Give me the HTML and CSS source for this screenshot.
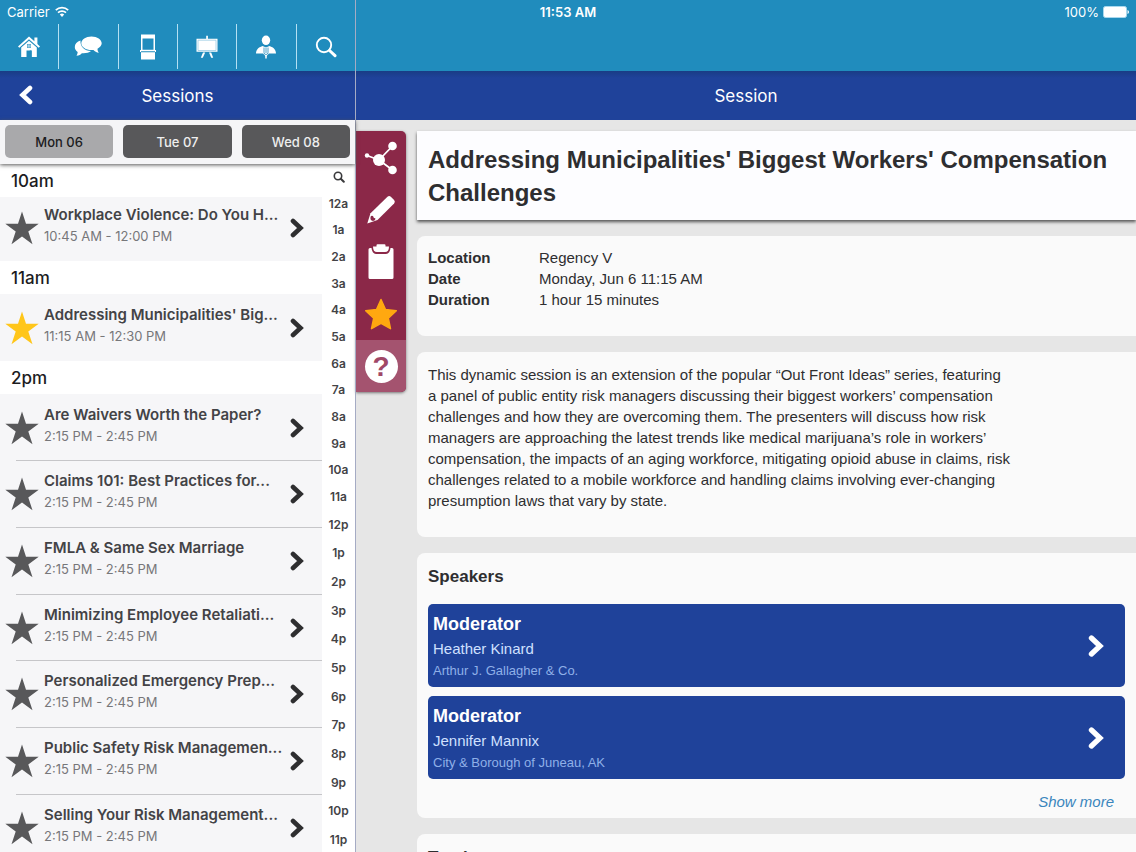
FILE: index.html
```html
<!DOCTYPE html>
<html lang="en">
<head>
<meta charset="utf-8">
<meta name="viewport" content="width=device-width, initial-scale=1">
<title>Session</title>
<link rel="stylesheet" href="styles.css">
</head>
<body>
<svg class="defs" aria-hidden="true">
  <symbol id="star" viewBox="0 0 34 34"><path d="M17 .5l4 12.300h12.700l-10.400 7.700 4.200 12.800L17 25.500 6.500 33.300l4.200-12.800L.3 12.800H13z"/></symbol>
  <symbol id="chev" viewBox="0 0 14 20"><path d="M3 3l7.500 7L3 17" fill="none" stroke="currentColor" stroke-width="4.600" stroke-linecap="round" stroke-linejoin="miter"/></symbol>
</svg>
<div class="app">
  <header class="top">
    <div class="status">
      <span class="carrier">Carrier
        <svg width="14" height="11" viewBox="0 0 14 11"><g class="line" stroke="#fff" stroke-width="1.700"><path d="M.8 4.200a9 9 0 0 1 12.400 0"/><path d="M3 6.700a5.800 5.800 0 0 1 8 0"/></g><path d="M4.800 8.600a3.200 3.200 0 0 1 4.400 0L7 10.900z" fill="#fff"/></svg>
      </span>
      <span class="clock">11:53 AM</span>
      <span class="power">100%
        <svg width="26" height="12" viewBox="0 0 26 12"><rect x=".5" y=".5" width="23" height="11" rx="2" fill="#fff" stroke="#a9d8ee"/><path d="M24.500 4v4q1.500-.5 1.500-2t-1.500-2" fill="#fff"/></svg>
      </span>
    </div>
    <nav class="tools" aria-label="Main">
      <button aria-label="Home"><svg width="24" height="24" viewBox="0 0 24 24"><path d="M12 1.500L1 11.500l1.300 1.300L12 4.200l9.700 8.600 1.300-1.300-2.600-2.400V2.500h-3v3.800z"/><path d="M4.200 12.500L12 5.700l7.800 6.800V22h-5v-6.500h-2V22H4.200z"/><path d="M10 9h4v4h-4z" fill="#208cbd"/><path d="M10.500 9.500h1.300v1.300h-1.300zM12.300 9.500h1.300v1.300h-1.300zM10.500 11.300h1.300v1.300h-1.300zM12.300 11.300h1.300v1.300h-1.300z"/><path d="M9.500 15.500h4.800V22H9.500z" fill="#208cbd"/></svg></button>
      <button aria-label="Messages"><svg width="28" height="24" viewBox="0 0 28 24"><path d="M6.500 5.500C3 6.500.8 9 .8 12c0 2 1.100 3.700 2.900 4.900-.1 1.500-.5 2.800-1.200 3.900 2.500-.3 4.300-1.200 5.300-2.500 4 .3 7.200-.5 9.200-2.200-6.500-.3-11-4.300-10.500-10.600"/><path d="M17.500 1.500c-5.700 0-10.200 3-10.200 6.800 0 3.900 4.500 6.800 10.200 6.800l2-.1c1.200 1.600 3 2.500 5.300 2.700-.9-1.100-1.300-2.500-1.300-4 2.500-1.200 4.200-3.200 4.200-5.400 0-3.800-4.500-6.800-10.200-6.800z"/></svg></button>
      <button aria-label="Kiosk"><svg width="18" height="26" viewBox="0 0 18 26"><path d="M2 .5h14V16h1v2h-1v7.500H2V18H1v-2h1z"/><path d="M3.500 4.500h11v11.300h-11zM2 17.300h14v.9H2z" fill="#208cbd"/></svg></button>
      <button aria-label="Presentations"><svg width="24" height="24" viewBox="0 0 24 24"><path d="M11.200.8h1.700v3H22.500v13h-21v-13h9.700zM8 17.500h2.200L7.800 22.800H5.800zM14 17.500h2.200l2 5.300h-2z"/><path class="line" d="M3 5.200h18v10.300H3z" stroke="#9bcce4" stroke-width=".8"/></svg></button>
      <button aria-label="Speakers"><svg width="22" height="24" viewBox="0 0 22 24"><ellipse cx="11" cy="5.300" rx="4.200" ry="4.800"/><path d="M1 18.500c.2-3.800 2-5.800 6.500-7.500l3.500 1.500 3.500-1.500c4.500 1.700 6.300 3.700 6.500 7.500H14L11 21.500 8 18.500z"/><path class="line" d="M9 12.500v5q0 2 2 2t2-2v-5M11 13v5" stroke="#208cbd" stroke-width=".8"/><path d="M11 20v3.500" stroke="#fff" stroke-width="1.500"/></svg></button>
      <button aria-label="Search"><svg width="22" height="22" viewBox="0 0 22 22"><circle class="line" cx="9" cy="9" r="7.200" stroke="#fff" stroke-width="1.900"/><path d="M14.500 14.500l5.500 5.200" stroke="#fff" stroke-width="3" stroke-linecap="round"/></svg></button>
    </nav>
  </header>
  <div class="panes">
    <aside class="side">
      <div class="bar"><button class="back" aria-label="Back"><svg width="14" height="20"><use href="#chev"/></svg></button><h1>Sessions</h1></div>
      <div class="days"><button class="on">Mon 06</button><button>Tue 07</button><button>Wed 08</button></div>
      <div class="browse">
        <div class="sessions">
          <h2 class="pinned">10am</h2>
          <div class="group">
            <a href="#" class="row"><svg class="star"><use href="#star"/></svg><span class="txt"><b>Workplace Violence: Do You H...</b><small>10:45 AM - 12:00 PM</small></span><svg class="chev"><use href="#chev"/></svg></a>
          </div>
          <h2>11am</h2>
          <div class="group">
            <a href="#" class="row"><svg class="star gold"><use href="#star"/></svg><span class="txt"><b>Addressing Municipalities' Big...</b><small>11:15 AM - 12:30 PM</small></span><svg class="chev"><use href="#chev"/></svg></a>
          </div>
          <h2>2pm</h2>
          <div class="group">
            <a href="#" class="row"><svg class="star"><use href="#star"/></svg><span class="txt"><b>Are Waivers Worth the Paper?</b><small>2:15 PM - 2:45 PM</small></span><svg class="chev"><use href="#chev"/></svg></a>
            <a href="#" class="row"><svg class="star"><use href="#star"/></svg><span class="txt"><b>Claims 101: Best Practices for...</b><small>2:15 PM - 2:45 PM</small></span><svg class="chev"><use href="#chev"/></svg></a>
            <a href="#" class="row"><svg class="star"><use href="#star"/></svg><span class="txt"><b>FMLA &amp; Same Sex Marriage</b><small>2:15 PM - 2:45 PM</small></span><svg class="chev"><use href="#chev"/></svg></a>
            <a href="#" class="row"><svg class="star"><use href="#star"/></svg><span class="txt"><b>Minimizing Employee Retaliati...</b><small>2:15 PM - 2:45 PM</small></span><svg class="chev"><use href="#chev"/></svg></a>
            <a href="#" class="row"><svg class="star"><use href="#star"/></svg><span class="txt"><b>Personalized Emergency Prep...</b><small>2:15 PM - 2:45 PM</small></span><svg class="chev"><use href="#chev"/></svg></a>
            <a href="#" class="row"><svg class="star"><use href="#star"/></svg><span class="txt"><b>Public Safety Risk Managemen...</b><small>2:15 PM - 2:45 PM</small></span><svg class="chev"><use href="#chev"/></svg></a>
            <a href="#" class="row"><svg class="star"><use href="#star"/></svg><span class="txt"><b>Selling Your Risk Management...</b><small>2:15 PM - 2:45 PM</small></span><svg class="chev"><use href="#chev"/></svg></a>
          </div>
        </div>
        <nav class="index" aria-label="Jump to hour">
          <button class="find" aria-label="Search"><svg width="12" height="12" viewBox="0 0 12 12" stroke="#3a3a3c"><circle class="line" cx="5" cy="5" r="3.700" stroke-width="1.600"/><path d="M7.800 7.800l3 3" stroke-width="2" stroke-linecap="round"/></svg></button>
          <div class="am"><a href="#">12a</a><a href="#">1a</a><a href="#">2a</a><a href="#">3a</a><a href="#">4a</a><a href="#">5a</a><a href="#">6a</a><a href="#">7a</a><a href="#">8a</a><a href="#">9a</a><a href="#">10a</a><a href="#">11a</a></div>
          <div class="pm"><a href="#">12p</a><a href="#">1p</a><a href="#">2p</a><a href="#">3p</a><a href="#">4p</a><a href="#">5p</a><a href="#">6p</a><a href="#">7p</a><a href="#">8p</a><a href="#">9p</a><a href="#">10p</a><a href="#">11p</a></div>
        </nav>
      </div>
    </aside>
    <main class="detail">
      <div class="bar"><h1>Session</h1></div>
      <div class="body">
        <div class="actions">
          <button aria-label="Share"><svg width="34" height="34" viewBox="0 0 34 34"><path class="line" d="M3 14.500L15 19 28.500 5M15 19l13.500 10" stroke="#fff" stroke-width="1.800"/><circle cx="15" cy="19" r="6"/><circle cx="28.500" cy="5" r="4.300"/><circle cx="28.500" cy="29" r="4.300"/><circle cx="3" cy="14.500" r="2.200"/></svg></button>
          <button aria-label="Notes"><svg width="30" height="30" viewBox="0 0 30 30"><path d="M21.500 1.700q1.700-1.500 3.300 0l3.300 3.300q1.500 1.700 0 3.400L11.500 25 1.300 28.500 4.500 18.200z"/><path d="M4.500 22.500q0-2.500 2.500-1.500.3 2 2.500 2.500 0 2-2.500 2.500-3-.5-2.500-3.500z" fill="#8b2848"/></svg></button>
          <button aria-label="Survey"><svg width="26" height="36" viewBox="0 0 26 36"><path d="M2 4h1.500q.5 5.500 4.500 6h10q4-.5 4.500-6H24q1.500 0 1.500 1.500v28q0 1.500-1.500 1.500H2Q.5 35 .5 33.500v-28Q.5 4 2 4z"/><path d="M8.500 2.500V1.200q0-.9 1-.9h7q1 0 1 .9v1.300H21q0 5.500-4 5.500H9Q5 8 5 2.500z"/></svg></button>
          <button aria-label="Favorite" class="fav"><svg width="34" height="34" viewBox="0 0 34 34"><path d="M17 2.500l4.500 10 10.800 1.200-8 7.400 2.200 10.600L17 26.300l-9.500 5.400 2.200-10.600-8-7.400 10.800-1.200z" stroke="currentColor" stroke-width="1.500" stroke-linejoin="round"/></svg></button>
          <button aria-label="Help" class="help"><span>?</span></button>
        </div>
        <div class="cards">
          <h2 class="title">Addressing Municipalities' Biggest Workers' Compensation Challenges</h2>
          <section class="card facts">
            <dl><dt>Location</dt><dd>Regency V</dd><dt>Date</dt><dd>Monday, Jun 6 11:15 AM</dd><dt>Duration</dt><dd>1 hour 15 minutes</dd></dl>
          </section>
          <section class="card about"><p>This dynamic session is an extension of the popular “Out Front Ideas” series, featuring a panel of public entity risk managers discussing their biggest workers’ compensation challenges and how they are overcoming them. The presenters will discuss how risk managers are approaching the latest trends like medical marijuana’s role in workers’ compensation, the impacts of an aging workforce, mitigating opioid abuse in claims, risk challenges related to a mobile workforce and handling claims involving ever-changing presumption laws that vary by state.</p></section>
          <section class="card">
            <h3>Speakers</h3>
            <div class="people">
              <a href="#" class="person"><span><b>Moderator</b><em>Heather Kinard</em><small>Arthur J. Gallagher &amp; Co.</small></span><svg width="16" height="24"><use href="#chev"/></svg></a>
              <a href="#" class="person"><span><b>Moderator</b><em>Jennifer Mannix</em><small>City &amp; Borough of Juneau, AK</small></span><svg width="16" height="24"><use href="#chev"/></svg></a>
            </div>
            <a href="#" class="more">Show more</a>
          </section>
          <section class="card"><h3>Tracks</h3></section>
        </div>
      </div>
    </main>
  </div>
</div>
</body>
</html>
```
FILE: styles.css
```css
* { box-sizing: border-box; margin: 0; padding: 0; }
button { border: 0; background: none; font: inherit; color: inherit; cursor: pointer; }
a { color: inherit; text-decoration: none; }
svg { display: block; fill: currentColor; flex: none; }
.line { fill: none; }
.defs { display: none; }

body { font-family: Inter, "Liberation Sans", sans-serif; color: #2e2e30; background: #e6e6e6; }
.app { position: relative; height: 100vh; display: flex; flex-direction: column; overflow: hidden; }
.app::after { content: ""; position: absolute; top: 0; bottom: 0; left: 355px; width: 1px; background: #a5abc4; pointer-events: none; }

.top { flex: none; background: #208cbd; color: #fff; }
.status { display: grid; grid-template-columns: 1fr auto 1fr; align-items: center; height: 23px; padding: 0 7px; font-size: 13px; }
.carrier, .power { display: flex; align-items: center; gap: 5px; }
.power { justify-content: flex-end; gap: 4px; }
.clock { font-weight: 600; }
.tools { display: flex; width: 355px; height: 48px; padding: 1px 0 2px; }
.tools button { flex: 1; display: grid; place-items: center; }
.tools button + button { border-left: 1px solid #b4e0f3; }

.panes { flex: 1; min-height: 0; display: flex; }
.side { width: 355px; flex: none; display: flex; flex-direction: column; background: #fff; }
.bar { position: relative; flex: none; height: 49px; display: grid; place-items: center; color: #fff; background: linear-gradient(#193c85, #1f429a 7px); }
.bar h1 { font-size: 17px; font-weight: 400; }
.back { position: absolute; left: 19px; top: 14px; transform: scaleX(-1); }

.days { position: relative; z-index: 2; flex: none; display: grid; grid-template-columns: repeat(3, 1fr); gap: 10px; padding: 5px 5px 6px; background: #f5f5f7; box-shadow: 0 1px 4px #555; }
.days button { height: 33px; border-radius: 5px; background: #58585a; color: #eee; font-size: 13px; font-weight: 500; }
.days .on { background: #a9a9ab; color: #1c1c1e; }

.browse { flex: 1; min-height: 0; display: flex; overflow: hidden; }
.sessions { flex: 1; min-width: 0; }
.sessions h2 { position: relative; height: 33px; padding-left: 11px; line-height: 35px; font-size: 17px; font-weight: 500; color: #1c1c1e; background: #fff; }
.sessions .pinned { z-index: 1; margin-bottom: -3px; }
.row { position: relative; display: flex; align-items: flex-start; height: 67px; padding: 10px 0 0 5px; background: #f6f6f8; }
.row:nth-child(3n+1):not(:only-child) { height: 66px; }
.row + .row::before { content: ""; position: absolute; top: 0; left: 16px; right: 0; height: 1px; background: #c6c6c9; }
.star { width: 34px; height: 34px; margin: 7px 5px 0 0; color: #58585a; }
.gold { color: #ffc61a; }
.txt { flex: 1; white-space: nowrap; }
.txt b { display: block; font-size: 15px; font-weight: 600; line-height: 21px; color: #434346; }
.txt small { display: block; font-size: 13px; line-height: 22px; color: #77777a; }
.chev { position: absolute; left: 290px; top: 24px; width: 14px; height: 20px; color: #2e2e30; }

.index { width: 33px; flex: none; font-size: 12px; font-weight: 600; text-align: center; color: #434346; }
.find { display: grid; place-items: center; width: 100%; height: 26px; }
.index div { display: grid; grid-auto-rows: 1fr; align-items: center; }
.am { height: 320px; }
.pm { height: 344px; }

.detail { flex: 1; min-width: 0; display: flex; flex-direction: column; padding-left: 1px; font-family: "Liberation Sans", Arial, sans-serif; }
.detail .bar h1 { font-family: Inter, sans-serif; }
.body { display: flex; align-items: flex-start; gap: 11px; padding-top: 11px; }
.actions { width: 50px; flex: none; padding-top: 1px; border-radius: 0 5px 5px 0; overflow: hidden; background: #8b2848; color: #fff; box-shadow: 0 1px 3px #777; }
.actions button { display: grid; place-items: center; width: 100%; height: 52px; }
.actions .fav { color: #ffa810; }
.actions .help { background: #a4536f; }
.help span { width: 33px; height: 33px; border-radius: 50%; background: #fff; color: #a04767; font-size: 28px; font-weight: 700; line-height: 33px; text-align: center; }

.cards { flex: 1; min-width: 0; display: grid; gap: 16px; }
.title { padding: 12px 11px 11px; font-size: 24px; line-height: 33px; background: #fdfdff; box-shadow: 0 2px 3px #555; }
.card { padding: 11px 11px 6px; border-radius: 8px 0 0 8px; background: #fafafa; font-size: 15px; line-height: 21px; }
.facts { padding: 11px 11px 26px; }
.facts dl { display: grid; grid-template-columns: 111px 1fr; }
.facts dt { font-weight: 700; }
.about { padding: 12px 11px 26px; }
.about p { max-width: 584px; }
.card h3 { font-size: 17px; line-height: 25px; }
.people { display: grid; gap: 9px; margin-top: 15px; }
.person { display: flex; align-items: center; justify-content: space-between; height: 83px; padding: 0 21px 0 5px; border-radius: 5px; background: #1f429a; color: #fff; }
.person b, .person em, .person small { display: block; }
.person b { font-size: 18px; line-height: 26px; }
.person em { font-style: normal; line-height: 24px; color: #cfe0ff; }
.person small { font-size: 13px; line-height: 20px; color: #8fb0e8; }
.more { display: block; width: fit-content; margin: 12px 11px 0 auto; font-style: italic; color: #3a86bd; }
```
